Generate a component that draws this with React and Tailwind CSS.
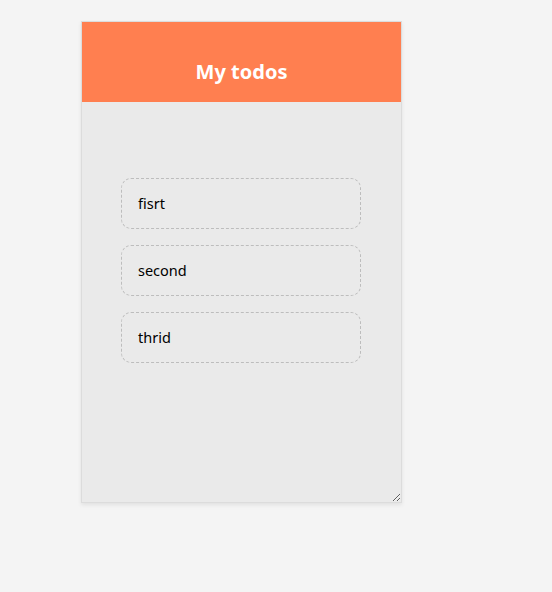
const todos = ['fisrt', 'second', 'thrid'];

export default function App() {
  return (
    <div className="min-h-[592px] bg-[#f4f4f4] pt-[21px] pl-[81px] font-['Noto_Sans',sans-serif]">
      <div className="w-[321px] h-[482px] border border-[#dcdcdc] bg-[#eaeaea] shadow-[0_2px_4px_rgba(0,0,0,0.08)] resize overflow-auto flex flex-col">
        {/* Header */}
        <header className="h-[80px] bg-[#ff7f50] flex items-end justify-center pb-[20px] shrink-0">
          <h1 className="text-[20px] font-bold text-white leading-none">My todos</h1>
        </header>

        {/* List */}
        <ul className="flex flex-col gap-[16px] pl-[39px] pr-[40px] pt-[76px]">
          {todos.map((t) => (
            <li
              key={t}
              className="h-[51px] border border-dashed border-[#bdbdbd] rounded-[10px] flex items-center pl-[16px] text-[14.5px] text-black"
            >
              {t}
            </li>
          ))}
        </ul>
      </div>
    </div>
  );
}
